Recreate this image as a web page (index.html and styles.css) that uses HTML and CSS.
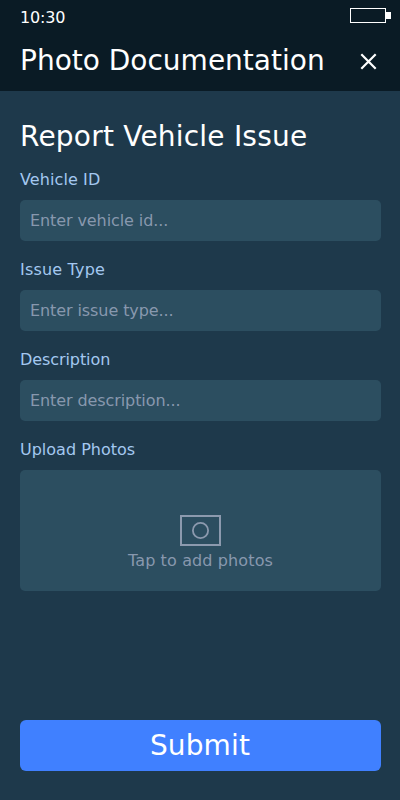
FILE: index.html
```html
<!DOCTYPE html>
<html lang="en">
<head>
<meta charset="utf-8">
<title>Photo Documentation</title>
<link rel="stylesheet" href="styles.css">
</head>
<body>
<div class="screen">
  <header class="top">
    <div class="status">
      <span class="time">10:30</span>
      <svg class="battery" width="41" height="15" viewBox="0 0 41 15" shape-rendering="crispEdges"><rect x="0.5" y="0.5" width="35" height="14" fill="none" stroke="#fff"/><rect x="36" y="4" width="5" height="7" fill="#fff"/></svg>
    </div>
    <div class="bar">
      <h1 class="title">Photo Documentation</h1>
      <button class="close" aria-label="Close"><svg width="17" height="17" viewBox="0 0 17 17"><path d="M1.3 1.3L15.7 15.7M15.7 1.3L1.3 15.7" stroke="#fff" stroke-width="2.2"/></svg></button>
    </div>
  </header>
  <main class="content">
    <h2 class="heading">Report Vehicle Issue</h2>
    <label class="field"><span class="label label-vehicle">Vehicle ID</span><input class="input" placeholder="Enter vehicle id..."></label>
    <label class="field"><span class="label label-type">Issue Type</span><input class="input" placeholder="Enter issue type..."></label>
    <label class="field"><span class="label label-description">Description</span><input class="input" placeholder="Enter description..."></label>
    <div class="field">
      <span class="label">Upload Photos</span>
      <div class="upload">
        <svg width="41" height="31" viewBox="0 0 41 31" fill="none" stroke="#8c9aae"><rect x="1" y="1" width="39" height="29" stroke-width="2"/><circle cx="20.5" cy="15.5" r="7.6" stroke-width="1.8"/></svg>
        <span class="hint">Tap to add photos</span>
      </div>
    </div>
    <button class="submit">Submit</button>
  </main>
</div>
</body>
</html>
```

FILE: styles.css
```css
* { box-sizing: border-box; }
body { margin: 0; font: 16px/20px "DejaVu Sans", sans-serif; color: #fff; }
.screen { display: flex; flex-direction: column; height: 800px; width: 400px; background: #1e394b; }
.top { height: 91px; background: #0a1b25; padding: 8px 9px 0 20px; }
.status { display: flex; justify-content: space-between; align-items: flex-start; height: 33px; }
.time { letter-spacing: -0.2px; }
.bar { display: flex; justify-content: space-between; align-items: center; height: 40px; padding-right: 14px; }
.title, .heading { margin: 0; font-weight: 400; font-size: 28px; line-height: 40px; white-space: nowrap; }
.close { display: flex; padding: 0; border: 0; background: none; }
.content { display: flex; flex-direction: column; flex: 1; padding: 26px 19px 29px 20px; }
.heading { margin-bottom: 13px; letter-spacing: 0.21px; }
.field { display: block; height: 90px; }
.label { display: block; color: #a4c8f0; height: 30px; }
.label-vehicle { letter-spacing: 0.1px; }
.label-type { letter-spacing: 0.18px; }
.label-description { letter-spacing: -0.08px; }
.input { display: block; width: 100%; height: 41px; padding: 0 10px; border: 0; border-radius: 5px; background: #2c4e60; color: #fff; font: inherit; letter-spacing: -0.09px; }
.input::placeholder { color: #8898ae; opacity: 1; }
.upload { display: flex; flex-direction: column; align-items: center; height: 121px; padding-top: 45px; border-radius: 5px; background: #2c4e60; }
.hint { margin-top: 5px; color: #8898ae; letter-spacing: 0.12px; }
.submit { margin-top: auto; height: 51px; border: 0; border-radius: 6px; background: #4080ff; color: #fff; font: 28px "DejaVu Sans", sans-serif; letter-spacing: 0.15px; padding-right: 7px; }
```
